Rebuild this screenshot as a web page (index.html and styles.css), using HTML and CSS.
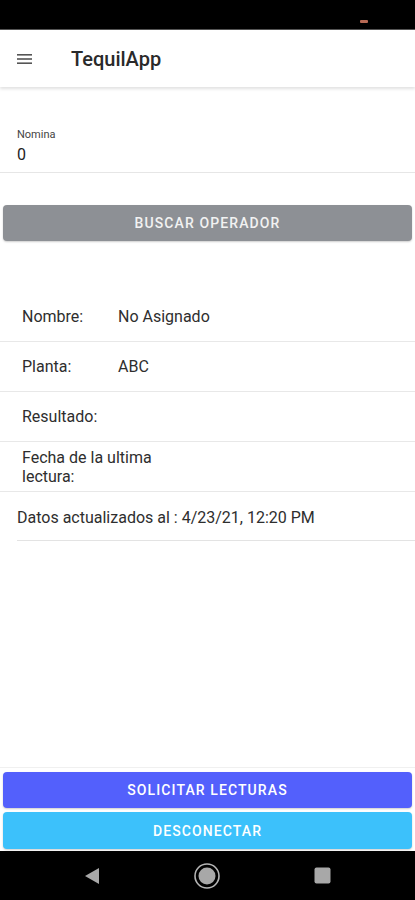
FILE: index.html
```html
<!DOCTYPE html>
<html lang="es">
<head>
    <meta charset="UTF-8">
    <meta name="viewport" content="width=device-width, initial-scale=1.0">
    <title>TequilApp</title>
    <link rel="stylesheet" href="styles.css">
</head>
<body>
    <div class="status-bar">
        <span class="status-dot"></span>
    </div>

    <header class="app-bar">
        <button class="menu-btn" aria-label="menu">
            <svg width="15" height="10" viewBox="0 0 15 10">
                <rect x="0" y="0" width="15" height="1.6" fill="#555"/>
                <rect x="0" y="4.2" width="15" height="1.6" fill="#555"/>
                <rect x="0" y="8.4" width="15" height="1.6" fill="#555"/>
            </svg>
        </button>
        <h1>TequilApp</h1>
    </header>

    <main class="content">
        <div class="field">
            <label class="field-label">Nomina</label>
            <div class="field-value">0</div>
        </div>

        <button class="btn btn-gray">BUSCAR OPERADOR</button>

        <div class="info">
            <div class="row">
                <span class="row-label">Nombre:</span>
                <span class="row-value">No Asignado</span>
            </div>
            <div class="row">
                <span class="row-label">Planta:</span>
                <span class="row-value">ABC</span>
            </div>
            <div class="row">
                <span class="row-label">Resultado:</span>
                <span class="row-value"></span>
            </div>
            <div class="row">
                <span class="row-label wide">Fecha de la ultima lectura:</span>
                <span class="row-value"></span>
            </div>
        </div>

        <div class="updated">Datos actualizados al : 4/23/21, 12:20 PM</div>
    </main>

    <footer class="actions">
        <button class="btn btn-blue">SOLICITAR LECTURAS</button>
        <button class="btn btn-cyan">DESCONECTAR</button>
    </footer>

    <nav class="nav-bar">
        <svg width="16" height="18" viewBox="0 0 16 18">
            <polygon points="15,1 15,17 1,9" fill="#a8a8a8"/>
        </svg>
        <svg width="28" height="28" viewBox="0 0 28 28">
            <circle cx="14" cy="14" r="12" fill="none" stroke="#b5b5b5" stroke-width="1.6"/>
            <circle cx="14" cy="14" r="8.5" fill="#a8a8a8"/>
        </svg>
        <svg width="17" height="17" viewBox="0 0 17 17">
            <rect x="0.5" y="0.5" width="16" height="16" rx="2" fill="#a8a8a8"/>
        </svg>
    </nav>
</body>
</html>
```

FILE: styles.css
```css
* {
    box-sizing: border-box;
}

body {
    margin: 0;
    height: 900px;
    display: flex;
    flex-direction: column;
    font-family: Roboto, "Liberation Sans", sans-serif;
    color: #2e2e2e;
    background: #fff;
}

.status-bar {
    height: 30px;
    background: #000;
    border-bottom: 1px solid #555;
    position: relative;
}

.status-dot {
    position: absolute;
    left: 360px;
    top: 20px;
    width: 8px;
    height: 3px;
    border-radius: 1px;
    background: #b86a55;
}

.app-bar {
    height: 57px;
    display: flex;
    align-items: center;
    background: #fff;
    box-shadow: 0 2px 3px rgba(0, 0, 0, 0.12);
    position: relative;
    z-index: 1;
}

.menu-btn {
    border: none;
    background: none;
    padding: 0;
    margin-left: 17px;
    width: 15px;
    height: 10px;
    display: flex;
}

.app-bar h1 {
    margin: 0 0 0 39px;
    font-size: 20px;
    font-weight: 500;
    color: #2a2a2a;
}

.content {
    flex: 1;
}

.field {
    padding: 41px 17px 7px;
    border-bottom: 1px solid #e6e6e6;
}

.field-label {
    display: block;
    font-size: 11px;
    line-height: 13px;
    color: #444;
}

.field-value {
    margin-top: 4px;
    font-size: 16px;
    line-height: 20px;
    color: #222;
}

.btn {
    display: block;
    width: calc(100% - 6px);
    margin: 0 3px;
    height: 36px;
    border: none;
    border-radius: 4px;
    color: #fff;
    font-family: Roboto, "Liberation Sans", sans-serif;
    font-size: 14px;
    font-weight: 500;
    letter-spacing: 1.1px;
    box-shadow: 0 1px 2px rgba(0, 0, 0, 0.2);
}

.btn-gray {
    margin-top: 32px;
    background: #8d9095;
    color: #f2f2f2;
}

.info {
    margin-top: 51px;
}

.row {
    display: flex;
    align-items: center;
    min-height: 50px;
    padding-left: 22px;
    border-bottom: 1px solid #e8e8e8;
    font-size: 16px;
    line-height: 19px;
}

.row-label {
    width: 96px;
    flex: none;
}

.row-label.wide {
    width: 150px;
}

.updated {
    margin-left: 17px;
    padding: 16px 0 13px;
    font-size: 16px;
    line-height: 19px;
    border-bottom: 1px solid #e3e3e3;
}

.actions {
    border-top: 1px solid #f0f0f0;
    padding: 4px 0 2px;
    display: flex;
    flex-direction: column;
    gap: 4px;
}

.btn-blue {
    background: #5360fc;
}

.btn-cyan {
    height: 37px;
    background: #3cc1fb;
}

.nav-bar {
    height: 49px;
    background: #000;
    display: flex;
    align-items: center;
    justify-content: space-between;
    padding: 0 84px 0 84px;
}
```
